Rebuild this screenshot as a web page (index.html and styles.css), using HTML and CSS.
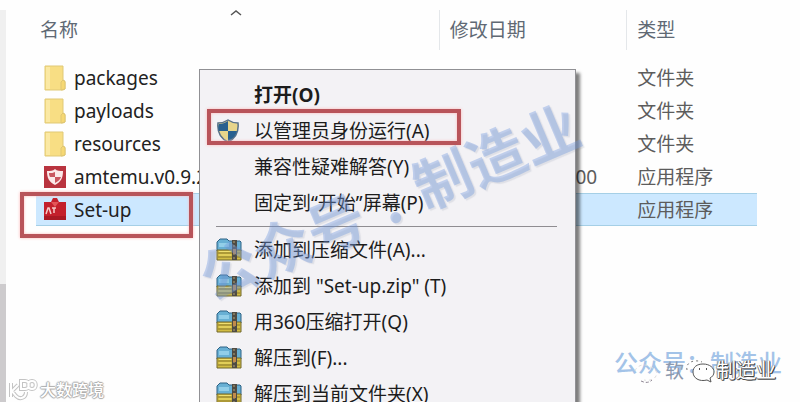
FILE: index.html
```html
<!DOCTYPE html>
<html lang="zh-CN">
<head>
<meta charset="utf-8">
<title>文件夹</title>
<link rel="stylesheet" href="styles.css">
</head>
<body>
<svg class="defs" aria-hidden="true">
  <symbol id="folder" viewBox="0 0 22 26">
    <path d="M1 1h18v14l2 1v8l-2 1H1z" fill="#f8de84" stroke="#e0c976"/>
    <path d="M2 2h4v22H2z" fill="#fbe9a4"/>
    <path d="M17 25v-8l2-2 2 2v7z" fill="#f6d873" stroke="#dfc674"/>
  </symbol>
  <symbol id="archive" viewBox="0 0 26 24">
    <path d="M1 4l3-3h7l2 2h11l1 1v9H1z" fill="#68b0d4" stroke="#2d6285"/>
    <path d="M3 5h10v4H3z" fill="#92cee8"/>
    <path d="M1 12h24v10H1z" fill="#d2bd43" stroke="#70662b"/>
    <path d="M2 15h22M2 19h22" stroke="#87772c"/>
    <path d="M3 13.500h12M3 17h12" stroke="#f0df70"/>
    <path d="M16 2h5v20h-5z" fill="#4e4b43"/>
    <path d="M18 3v18" stroke="#b4a477" stroke-dasharray="2 2"/>
    <path d="M17 11h3v5h-3z" fill="#c08b4b"/>
  </symbol>
</svg>
<main class="explorer">
  <div class="rail"><div class="thumb"></div></div>
  <section class="files">
    <svg class="sort" viewBox="0 0 12 8"><path d="M1 6l5-4 5 4" fill="none" stroke="#555" stroke-width="1.500"/></svg>
    <table>
      <thead>
        <tr><th class="name">名称</th><th class="date">修改日期</th><th class="type">类型</th></tr>
      </thead>
      <tbody>
        <tr><td><span class="file"><svg class="icon"><use href="#folder"/></svg>packages</span></td><td></td><td>文件夹</td></tr>
        <tr><td><span class="file"><svg class="icon"><use href="#folder"/></svg>payloads</span></td><td></td><td>文件夹</td></tr>
        <tr><td><span class="file"><svg class="icon"><use href="#folder"/></svg>resources</span></td><td></td><td>文件夹</td></tr>
        <tr><td><span class="file"><svg class="icon" viewBox="0 0 22 22"><path d="M0 0h22v22H0z" fill="#b9343f"/><path d="M11 3c2 2 5 2 8 2 0 7-2 11-8 14C5 16 3 12 3 5c3 0 6 0 8-2z" fill="#fbe9e9"/><path d="M11 6v5H6c-1-2-1-3-1-4 3 0 4 0 6-1zM11 11h6c-1 3-3 4-6 6z" fill="#c95760"/></svg>amtemu.v0.9.2</span></td><td class="modified">00</td><td>应用程序</td></tr>
        <tr class="selected"><td><span class="file"><svg class="icon" viewBox="0 0 22 24"><path d="M0 4h7l2-4h4l2 4h7v17l-1 1H1l-1-1z" fill="#c3202c"/><path d="M7 4h8l-4 5z" fill="#e35558"/><path d="M2 16l2-6h1l2 6M8 10h4M10 10v5" fill="none" stroke="#f6cac8" stroke-width="1.500"/><path d="M0 18h22v4H0z" fill="#a91924"/></svg>Set-up</span></td><td></td><td>应用程序</td></tr>
      </tbody>
    </table>
  </section>

  <div class="menu" role="menu">
    <button class="default" role="menuitem"><span class="glyph"></span>打开(O)</button>
    <button role="menuitem"><span class="glyph"><svg class="shield" viewBox="0 0 24 24"><path d="M12 1c3 2 7 3 10 3 1 9-2 15-10 19C4 19 1 13 2 4c3 0 7-1 10-3z" fill="#e7d58b" stroke="#58718a" stroke-width="1.500"/><path d="M12 2v10H3C2 9 2 7 3 5c3 0 6-1 9-3zM12 12h9c-1 4-4 8-9 10z" fill="#28608f"/></svg></span>以管理员身份运行(A)</button>
    <button role="menuitem"><span class="glyph"></span>兼容性疑难解答(Y)</button>
    <button role="menuitem"><span class="glyph"></span>固定到“开始”屏幕(P)</button>
    <hr>
    <button role="menuitem"><span class="glyph"><svg class="zip"><use href="#archive"/></svg></span>添加到压缩文件(A)...</button>
    <button role="menuitem"><span class="glyph"><svg class="zip"><use href="#archive"/></svg></span>添加到 "Set-up.zip" (T)</button>
    <button role="menuitem"><span class="glyph"><svg class="zip"><use href="#archive"/></svg></span>用360压缩打开(Q)</button>
    <button role="menuitem"><span class="glyph"><svg class="zip"><use href="#archive"/></svg></span>解压到(F)...</button>
    <button role="menuitem"><span class="glyph"><svg class="zip"><use href="#archive"/></svg></span>解压到当前文件夹(X)</button>
  </div>

  <div class="mark mark-file"></div>
  <div class="mark mark-admin"></div>
  <div class="watermark"><span>公众号</span><span class="dot">.</span><span>制造业</span></div>
  <div class="account">公众号：制造业</div>
  <div class="wechat">
    <span class="under">软</span>
    <svg viewBox="0 0 32 26"><path d="M3 12C1 4 11 1 18 4" fill="none" stroke="#777" stroke-dasharray="2 3"/><path d="M19 6c7 0 11 4 11 8 0 3-2 5-4 6l1 4-4-2c-8 2-14-2-14-8 0-5 4-8 10-8z" fill="#fff" stroke="#555"/><path d="M15 11h1M22 11h1" stroke="#555" stroke-width="2"/></svg>
    <span class="outlined">制造业</span>
  </div>
  <svg class="ghost" viewBox="0 0 30 22"><path d="M3 9C5 3 13 1 18 5c5 1 8 5 6 9-2 4-8 5-12 4" fill="none" stroke="#ddd" stroke-dasharray="3 3"/><path d="M9 19c4 2 8 2 11-1" fill="none" stroke="#8d8592" stroke-dasharray="3 2"/></svg>
  <div class="brand">
    <svg viewBox="0 0 30 22"><path d="M3 4v14M10 6l-6 6 4 5c4 4 10 2 10-4M13 2h4c5 0 5 8 0 8h-4zM24 2c-5 0-5 8 0 8s5-8 0-8z" fill="none" stroke="#c4c4c4" stroke-width="4"/><path d="M3 4v14M10 6l-6 6 4 5c4 4 10 2 10-4M13 2h4c5 0 5 8 0 8h-4zM24 2c-5 0-5 8 0 8s5-8 0-8z" fill="none" stroke="#fff" stroke-width="2"/></svg>
    <span>大数跨境</span>
  </div>
</main>
</body>
</html>
```
FILE: styles.css
```css
* {
  box-sizing: border-box;
}

body {
  margin: 0;
  background: #fff;
  color: #222;
  font: 19px/24px "Noto Sans", "Noto Sans CJK SC", sans-serif;
}

.defs {
  position: absolute;
  width: 0;
  height: 0;
}

.explorer {
  position: relative;
  display: flex;
  height: calc(100vh - 4px);
  padding-top: 10px;
  overflow: hidden;
  background: #fefefe;
}

.rail {
  display: flex;
  flex: none;
  flex-direction: column;
  justify-content: flex-end;
  width: 6px;
  background: #f0f0f0;
}

.thumb {
  height: 30%;
  background: #cdcbcd;
}

.files {
  flex: 1;
  padding: 0 43px 0 30px;
}

.sort {
  position: absolute;
  top: 9px;
  left: 230px;
  width: 12px;
  height: 8px;
}

table {
  width: 100%;
  border-collapse: separate;
  border-spacing: 0;
  table-layout: fixed;
}

th {
  height: 40px;
  padding: 0 0 0 10px;
  border-right: 1px solid #e4e7ea;
  color: #606974;
  font-weight: 400;
  text-align: left;
}

th.type {
  border-right: 0;
}

th.name {
  width: 56%;
  padding-left: 4px;
}

th.date {
  width: 26%;
}

th.type {
  width: 18%;
}

tbody::before {
  display: block;
  height: 11px;
  content: "";
}

td {
  height: 33px;
  padding: 0 0 0 10px;
  border: 1px solid transparent;
  border-width: 1px 0;
  color: #5c5c5c;
  white-space: nowrap;
}

td:first-child {
  padding-left: 8px;
  color: #222;
}

td.modified {
  padding-right: 30px;
  text-align: right;
}

.selected td {
  border-color: #a5cfe6;
  background: #cce8ff;
}

.file {
  display: flex;
  align-items: center;
  gap: 8px;
}

.icon {
  flex: none;
  width: 22px;
  height: 26px;
}

.menu {
  position: absolute;
  top: 69px;
  left: 199px;
  width: 377px;
  padding: 7px 0;
  border: 1px solid #909094;
  background: #f3f2f5;
  box-shadow: 4px 4px 3px rgba(0, 0, 0, 0.5);
}

.menu button {
  display: flex;
  align-items: center;
  width: 100%;
  height: 36px;
  padding: 0;
  border: 0;
  background: none;
  color: #1c1c1c;
  font: inherit;
  text-align: left;
  white-space: pre;
}

.menu .default {
  font-weight: 700;
}

.menu hr {
  height: 1px;
  margin: 5px 18px 5px 16px;
  border: 0;
  background: #8f8d91;
}

.glyph {
  display: flex;
  flex: none;
  width: 54px;
  padding-left: 16px;
}

.shield {
  width: 24px;
  height: 24px;
}

.zip {
  width: 26px;
  height: 24px;
}

.mark {
  position: absolute;
  border: 4px solid #b8545a;
  box-shadow: 0 0 3px #ffb9b9, inset 0 0 3px #ffb9b9;
}

.mark-file {
  top: 192px;
  left: 20px;
  width: 173px;
  height: 46px;
}

.mark-admin {
  top: 109px;
  left: 207px;
  width: 254px;
  height: 36px;
}

.watermark {
  position: absolute;
  top: 164px;
  left: 185px;
  display: flex;
  color: rgba(110, 150, 220, 0.38);
  font: 700 58px/70px "Noto Sans CJK SC", sans-serif;
  text-shadow: 1px 2px 1px rgba(110, 120, 150, 0.15);
  transform: rotate(-23deg);
  white-space: nowrap;
}

.dot {
  width: 58px;
  text-align: center;
}

.account {
  position: absolute;
  right: 18px;
  bottom: 24px;
  color: #a3c3e8;
  font: 500 24px/32px "Noto Sans CJK SC", sans-serif;
}

.wechat {
  position: absolute;
  right: 24px;
  bottom: 18px;
  display: flex;
  align-items: center;
}

.wechat svg {
  width: 32px;
  height: 26px;
}

.under {
  color: #8d99ad;
}

.outlined {
  color: #fff;
  font-size: 20px;
  text-shadow: 1px 1px 0 #444, 1px 0 0 #555, 0 1px 0 #555, -1px 0 0 #999;
}

.ghost {
  position: absolute;
  right: 138px;
  bottom: 18px;
  width: 30px;
  height: 22px;
}

.brand {
  position: absolute;
  bottom: 0;
  left: 8px;
  display: flex;
  align-items: center;
  gap: 2px;
  color: #fff;
  font-size: 16px;
  font-weight: 500;
  text-shadow: 1px 0 1px #aaa, -1px 0 1px #aaa, 0 1px 1px #aaa, 0 -1px 1px #aaa;
}

.brand svg {
  width: 30px;
  height: 22px;
}
```
